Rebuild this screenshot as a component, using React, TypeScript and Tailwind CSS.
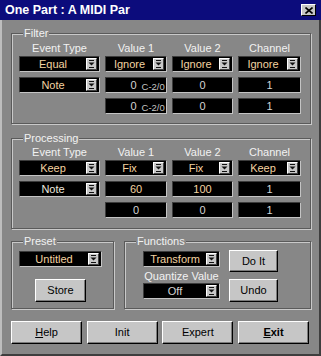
import type { ReactNode } from "react";

type Tone = "tan" | "grey" | "light";

const toneClass: Record<Tone, string> = {
    tan: "text-[#f3d3a0]",
    grey: "text-[#d4d4d4]",
    light: "text-[#ece8de]",
};

const fieldBase =
    "h-[16px] bg-black border border-t-[#3c3c3c] border-l-[#3c3c3c] border-b-[#c4c4c4] border-r-[#c4c4c4] flex items-center text-[11px] leading-none overflow-hidden";

const buttonBase =
    "bg-[#c6c6c6] border border-t-white border-l-white border-b-black border-r-black shadow-[inset_-1px_-1px_0_#7a7a7a] flex items-center justify-center text-[11px] text-black";

function ArrowButton() {
    return (
        <span className="w-[11px] h-[12px] shrink-0 bg-[#c8c8c8] border border-t-white border-l-white border-b-[#404040] border-r-[#404040] flex items-center justify-center">
            <svg width="7" height="8" viewBox="0 0 7 8">
                <rect x="1" y="0" width="5" height="1" fill="#111" />
                <path d="M0.5 2.5 H6.5 L3.5 5.5 Z" fill="#111" />
                <rect x="1" y="7" width="5" height="1" fill="#111" />
            </svg>
        </span>
    );
}

function Field({ children, tone = "grey", arrow = false }: { children?: ReactNode; tone?: Tone; arrow?: boolean }) {
    return (
        <div className={`${fieldBase} ${toneClass[tone]} ${arrow ? "pr-[2px]" : ""}`}>
            <span className="flex-1 text-center whitespace-nowrap">{children}</span>
            {arrow && <ArrowButton />}
        </div>
    );
}

function NoteField({ value }: { value: string }) {
    return (
        <div className={`${fieldBase} ${toneClass.grey}`}>
            <span className="flex-1" />
            <span>{value}</span>
            <span className="flex-1 min-w-0 pl-[5px] pt-[3px] text-[9.5px] whitespace-nowrap overflow-hidden text-[#c4c4c4]">C-2/0</span>
        </div>
    );
}

function GroupBox({ label, className, children }: { label: string; className: string; children: ReactNode }) {
    return (
        <div className={`relative border border-[#5a5a5a] shadow-[inset_1px_1px_0_#c9c9c9,1px_1px_0_#c9c9c9] ${className}`}>
            <span className="absolute -top-[7px] left-[11px] px-[1px] bg-[#878787] text-[11px] leading-[13px] text-[#f2f2f2]">
                {label}
            </span>
            {children}
        </div>
    );
}

const columns = ["Event Type", "Value 1", "Value 2", "Channel"];

function EventGrid({ rows }: { rows: ReactNode[][] }) {
    return (
        <div className="flex flex-col pl-[7px]">
            <div className="grid grid-cols-[81px_62px_61px_63px] gap-x-[5px] h-[13px] text-[11px] leading-[13px] text-[#f2f2f2]">
                {columns.map((c) => (
                    <span key={c} className="text-center whitespace-nowrap">{c}</span>
                ))}
            </div>
            <div className="grid grid-cols-[81px_62px_61px_63px] gap-x-[5px] gap-y-[5px] mt-[1px]">
                {rows.flat().map((cell, i) => (
                    <div key={i}>{cell}</div>
                ))}
            </div>
        </div>
    );
}

function TitleBar() {
    return (
        <div className="h-[20px] shrink-0 bg-[#0c0c7c] flex items-center justify-between pl-[5px] pr-[5px]">
            <span className="text-white font-bold text-[12.5px] leading-none whitespace-nowrap">One Part : A MIDI Par</span>
            <button className="w-[15px] h-[12px] bg-[#c6c6c6] border border-t-white border-l-white border-b-black border-r-black flex items-center justify-center">
                <svg width="8" height="7" viewBox="0 0 8 7">
                    <path d="M0.5 0.5 L7.5 6.5 M7.5 0.5 L0.5 6.5" stroke="#000" strokeWidth="1.6" />
                </svg>
            </button>
        </div>
    );
}

export default function App() {
    const filterRows: ReactNode[][] = [
        [
            <Field tone="tan" arrow>Equal</Field>,
            <Field tone="tan" arrow>Ignore</Field>,
            <Field tone="tan" arrow>Ignore</Field>,
            <Field tone="tan" arrow>Ignore</Field>,
        ],
        [<Field tone="tan" arrow>Note</Field>, <NoteField value="0" />, <Field>0</Field>, <Field>1</Field>],
        [null, <NoteField value="0" />, <Field>0</Field>, <Field>1</Field>],
    ];

    const processingRows: ReactNode[][] = [
        [
            <Field tone="tan" arrow>Keep</Field>,
            <Field tone="tan" arrow>Fix</Field>,
            <Field tone="tan" arrow>Fix</Field>,
            <Field tone="tan" arrow>Keep</Field>,
        ],
        [<Field tone="light" arrow>Note</Field>, <Field tone="tan">60</Field>, <Field tone="tan">100</Field>, <Field>1</Field>],
        [null, <Field>0</Field>, <Field>0</Field>, <Field>1</Field>],
    ];

    return (
        <div className="w-[321px] h-[356px] bg-[#878787] flex flex-col overflow-hidden select-none font-['Liberation_Sans',Arial,sans-serif]">
            <TitleBar />
            <div className="flex-1 flex flex-col pl-[9px] pr-[8px] border-l-2 border-l-[#bdbdbd] border-r-2 border-r-[#3e3e3e] border-b-2 border-b-[#3e3e3e]">
                <GroupBox label="Filter" className="mt-[13px] h-[91px] pt-[8px]">
                    <EventGrid rows={filterRows} />
                </GroupBox>

                <GroupBox label="Processing" className="mt-[14px] h-[91px] pt-[7px]">
                    <EventGrid rows={processingRows} />
                </GroupBox>

                <div className="flex gap-[10px] mt-[12px] h-[68px]">
                    <GroupBox label="Preset" className="w-[103px] pt-[9px] pl-[7px]">
                        <div className="w-[83px]">
                            <Field tone="tan" arrow>Untitled</Field>
                        </div>
                        <button className={`${buttonBase} w-[51px] h-[23px] mt-[12px] ml-[16px]`}>Store</button>
                    </GroupBox>

                    <GroupBox label="Functions" className="flex-1 flex pl-[18px]">
                        <div className="w-[77px] flex flex-col pt-[9px]">
                            <Field tone="tan" arrow>Transform</Field>
                            <span className="mt-[3px] h-[13px] text-[11px] leading-[13px] text-[#f2f2f2] text-center whitespace-nowrap -mx-[6px]">
                                Quantize Value
                            </span>
                            <Field arrow>Off</Field>
                        </div>
                        <div className="ml-[9px] flex flex-col pt-[8px]">
                            <button className={`${buttonBase} w-[49px] h-[22px]`}>Do It</button>
                            <button className={`${buttonBase} w-[49px] h-[23px] mt-[7px]`}>Undo</button>
                        </div>
                    </GroupBox>
                </div>

                <div className="w-[298px] flex justify-between mt-[12px]">
                    <button className={`${buttonBase} w-[71px] h-[23px]`}>
                        <span><span className="underline">H</span>elp</span>
                    </button>
                    <button className={`${buttonBase} w-[71px] h-[23px]`}>Init</button>
                    <button className={`${buttonBase} w-[71px] h-[23px]`}>Expert</button>
                    <button className={`${buttonBase} w-[71px] h-[23px] font-bold`}>
                        <span><span className="underline">E</span>xit</span>
                    </button>
                </div>
            </div>
        </div>
    );
}
